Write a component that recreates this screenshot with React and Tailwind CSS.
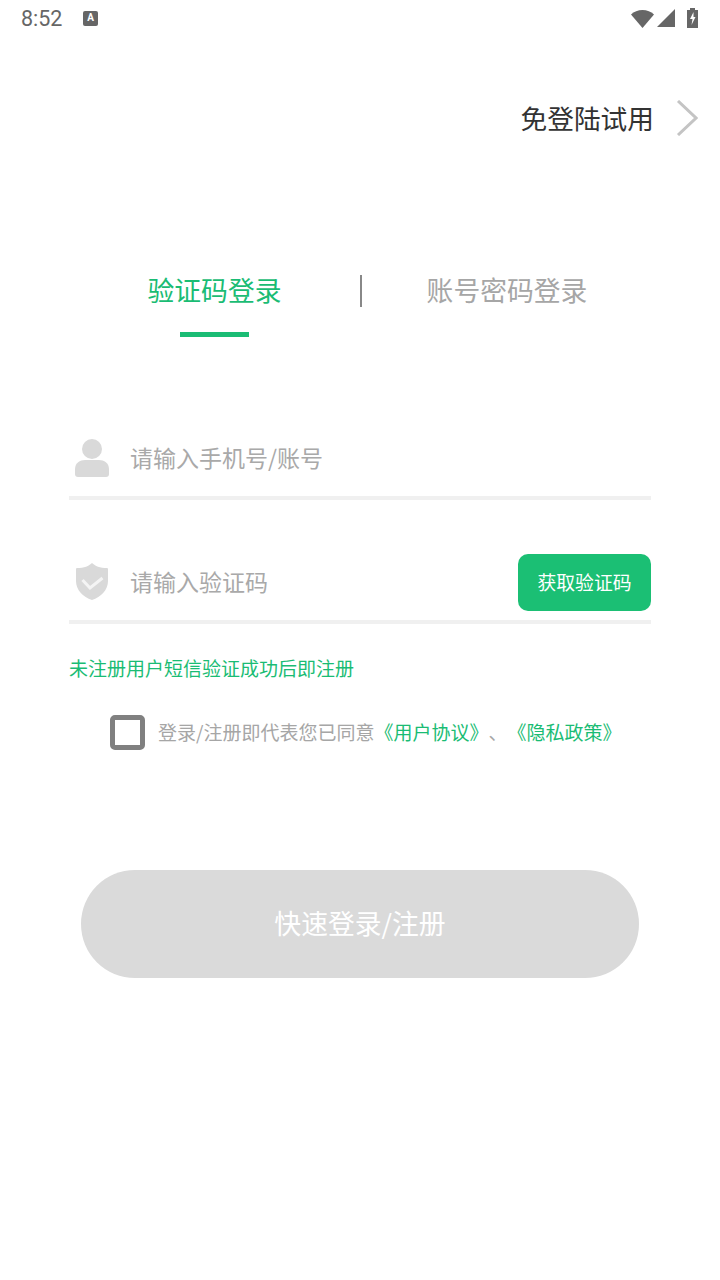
const font = { fontFamily: '"Noto Sans CJK SC", Roboto, sans-serif' };

function UserIcon() {
  return (
    <svg width="34" height="38" viewBox="0 0 34 38" fill="#d9d9d9">
      <circle cx="17" cy="10" r="10" />
      <path d="M0 30c0-6 5-9 10-9h14c5 0 10 3 10 9v5c0 2-1 3-3 3H3c-2 0-3-1-3-3z" />
    </svg>
  );
}

function ShieldIcon() {
  return (
    <svg width="32" height="37" viewBox="0 0 32 37">
      <path d="M16 0c3 3 8 5 15 5 1 0 1 1 1 1v12c0 9-7 16-16 19C7 34 0 27 0 18V6s0-1 1-1c7 0 12-2 15-5z" fill="#d9d9d9" />
      <path d="M6.500 17l7.500 8L26.500 15" fill="none" stroke="#f4f4f4" strokeWidth="3" />
    </svg>
  );
}

function StatusBar() {
  return (
    <div className="h-9 flex items-center pl-[21px] pr-[22px] text-[#666]">
      <span className="text-[21.500px] leading-none w-[62px] mt-[1px]" style={{ fontFamily: "Roboto, sans-serif" }}>8:52</span>
      <div className="w-[15px] h-[15px] rounded-[2px] bg-[#666] text-white flex items-center justify-center text-[10px] font-bold leading-none" style={{ fontFamily: "Roboto, sans-serif" }}>A</div>
      <div className="ml-auto flex items-center">
        <svg width="23" height="19" viewBox="0 0 23 19" fill="#666"><path d="M0 5.500C3 2.500 7 1 11.500 1S20 2.500 23 5.500L11.500 19z" /></svg>
        <svg className="ml-[3px]" width="18" height="18" viewBox="0 0 18 18" fill="#666"><path d="M18 0v18H0z" /></svg>
        <svg className="ml-[12px]" width="11" height="20" viewBox="0 0 11 20" fill="#666"><path d="M3 0h5v2h3v18H0V2h3z" /><path d="M6.500 4L3 11h2.500L4.500 17 8.500 9H6.500z" fill="#fff" /></svg>
      </div>
    </div>
  );
}

export default function App() {
  return (
    <div className="w-[720px] h-[1280px] bg-white overflow-hidden [text-spacing-trim:space-all]" style={font}>
      <StatusBar />

      {/* saltar login */}
      <div className="mt-[58px] h-[46px] flex items-center justify-end pr-[22px]">
        <span className="text-[26.700px] text-[#333] leading-none mt-[2px]">免登陆试用</span>
        <svg className="ml-[22px] mt-[2px]" width="22" height="36" viewBox="0 0 22 36" fill="none" stroke="#c4c4c4" strokeWidth="3"><path d="M2 1l18 17L2 35" /></svg>
      </div>

      {/* tabs */}
      <div className="mt-[133px] h-[70px]">
        <div className="flex items-start">
          <div className="w-[360px] pl-[69px] flex flex-col items-center">
            <span className="text-[26.800px] leading-[40px] text-[#1abc74] mt-[-3px]">验证码登录</span>
            <div className="mt-[22px] w-[69px] h-[5px] bg-[#1abc74]" />
          </div>
          <div className="w-[2px] h-[32px] bg-[#888] mt-[2px]" />
          <div className="flex-1 flex justify-center pr-[68px]">
            <span className="text-[26.800px] leading-[40px] text-[#a6a6a6] mt-[-3px]">账号密码登录</span>
          </div>
        </div>
      </div>

      {/* formulario */}
      <div className="mt-[83px] mx-[69px]">
        <div className="h-[74px] border-b-4 border-[#f0f0f0] flex items-center pl-[6px] pb-[7px]">
          <UserIcon />
          <span className="ml-[21px] text-[23px] text-[#a9a9a9] leading-none">请输入手机号/账号</span>
        </div>
        <div className="mt-[50px] h-[74px] border-b-4 border-[#f0f0f0] flex items-center pl-[7px] pb-[7px]">
          <ShieldIcon />
          <span className="ml-[22px] text-[23px] text-[#a9a9a9] leading-none">请输入验证码</span>
          <button className="ml-auto mt-[1px] w-[133px] h-[57px] rounded-[10px] bg-[#1bbf74] text-white text-[18.800px]">获取验证码</button>
        </div>
        <p className="mt-[30px] text-[19px] leading-[28px] text-[#1abc74]">未注册用户短信验证成功后即注册</p>
        <div className="mt-[33px] ml-[41px] flex items-center">
          <div className="w-[35px] h-[35px] border-[5px] border-[#808080] rounded-[5px]" />
          <p className="ml-[13px] mt-[-3px] text-[19px] leading-none whitespace-nowrap text-[#a6a6a6]">
            登录/注册即代表您已同意<span className="text-[#1abc74]">《用户协议》</span>、<span className="text-[#1abc74]">《隐私政策》</span>
          </p>
        </div>
      </div>

      <div className="mt-[120px] mx-[81px]">
        <button className="w-full h-[108px] rounded-[54px] bg-[#dadada] text-white text-[26.800px] pb-[2px]">快速登录/注册</button>
      </div>
    </div>
  );
}
